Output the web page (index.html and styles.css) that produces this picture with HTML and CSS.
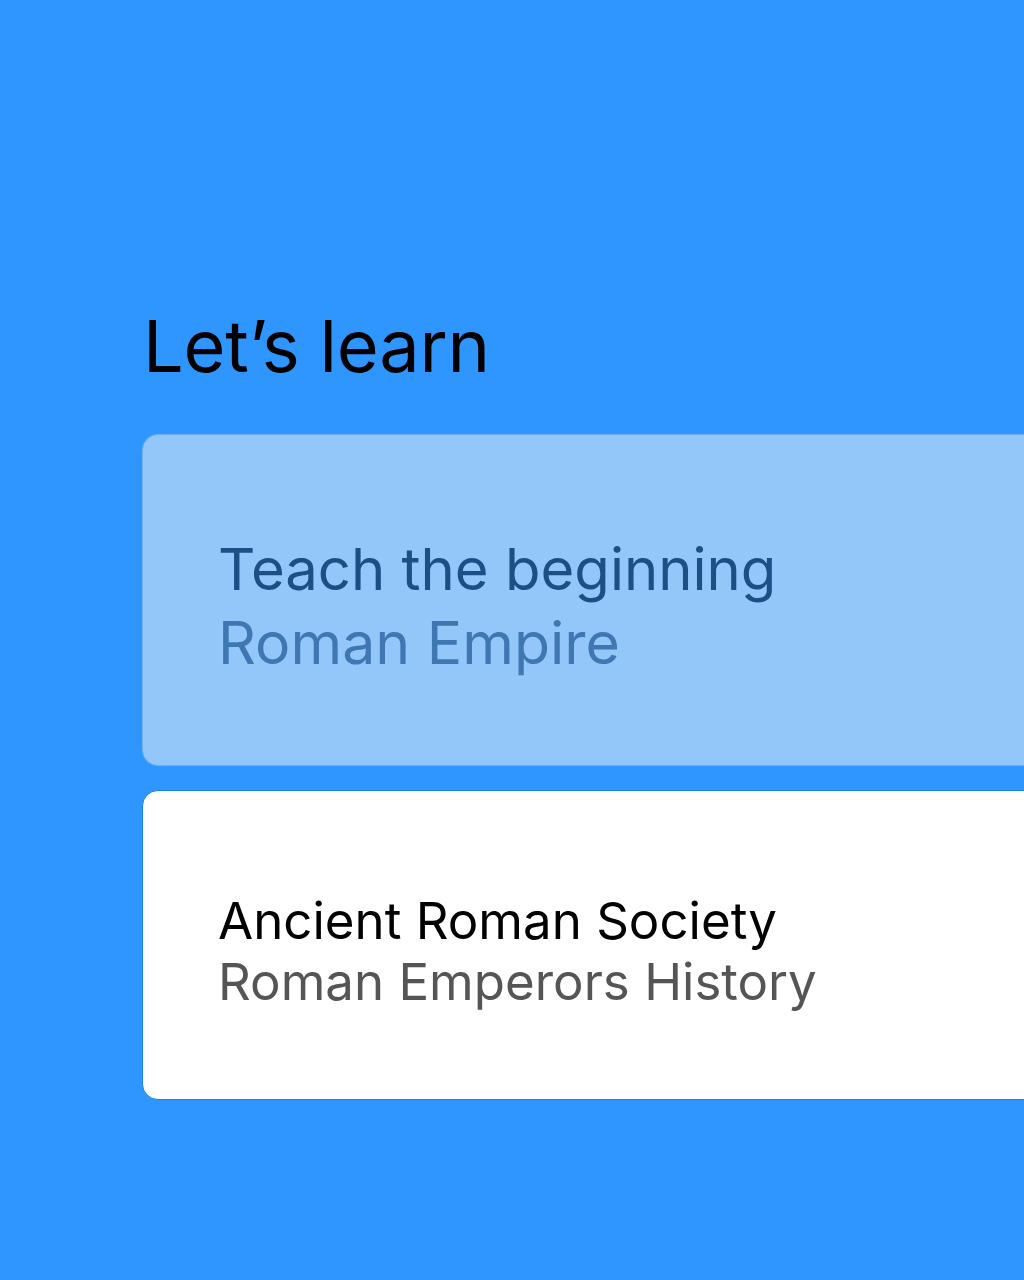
FILE: index.html
```html
<!DOCTYPE html>
<html lang="en">
<head>
  <meta charset="UTF-8">
  <title>Let's learn</title>
  <link rel="stylesheet" href="styles.css">
</head>
<body>
  <main class="learn">
    <h1 class="learn-title">Let’s learn</h1>
    <div class="topic-list">
      <div class="topic topic-active">
        <div class="topic-name">Teach the beginning</div>
        <div class="topic-sub">Roman Empire</div>
      </div>
      <div class="topic topic-next">
        <div class="topic-name">Ancient Roman Society</div>
        <div class="topic-sub">Roman Emperors History</div>
      </div>
    </div>
  </main>
</body>
</html>
```

FILE: styles.css
```css
:root {
  --bg: #2e96fe;
  --card-soft: #93c7f9;
  --card: #fff;
  --radius: 16px;
}
html, body {
  margin: 0;
  padding: 0;
  background: var(--bg);
  font-family: Inter, 'Liberation Sans', sans-serif;
}
.learn {
  padding: 310px 0 0 142px;
  overflow: hidden;
}
.learn-title {
  margin: 0 0 52px 1px;
  font-size: 72px;
  font-weight: 400;
  line-height: 1;
  color: #000;
  letter-spacing: -0.2px;
}
.topic-list {
  display: flex;
  flex-direction: column;
  gap: 24px;
  margin-right: -40px;
}
.topic {
  box-sizing: border-box;
  border-radius: var(--radius);
  padding: 0 0 0 75px;
  display: flex;
  flex-direction: column;
  justify-content: center;
}
.topic-active {
  height: 332px;
  background: var(--card-soft);
  border: 1px solid #73adea;
  padding-top: 12px;
}
.topic-active .topic-name {
  font-size: 58px;
  line-height: 73px;
  color: #1d4f86;
}
.topic-active .topic-sub {
  font-size: 59px;
  line-height: 73px;
  color: #3e77b1;
}
.topic-next {
  height: 310px;
  background: var(--card);
  border: 1px solid #1a80ea;
  padding-top: 12px;
}
.topic-next .topic-name {
  font-size: 51px;
  line-height: 61px;
  color: #000;
}
.topic-next .topic-sub {
  font-size: 51px;
  line-height: 61px;
  color: #555;
}
```
